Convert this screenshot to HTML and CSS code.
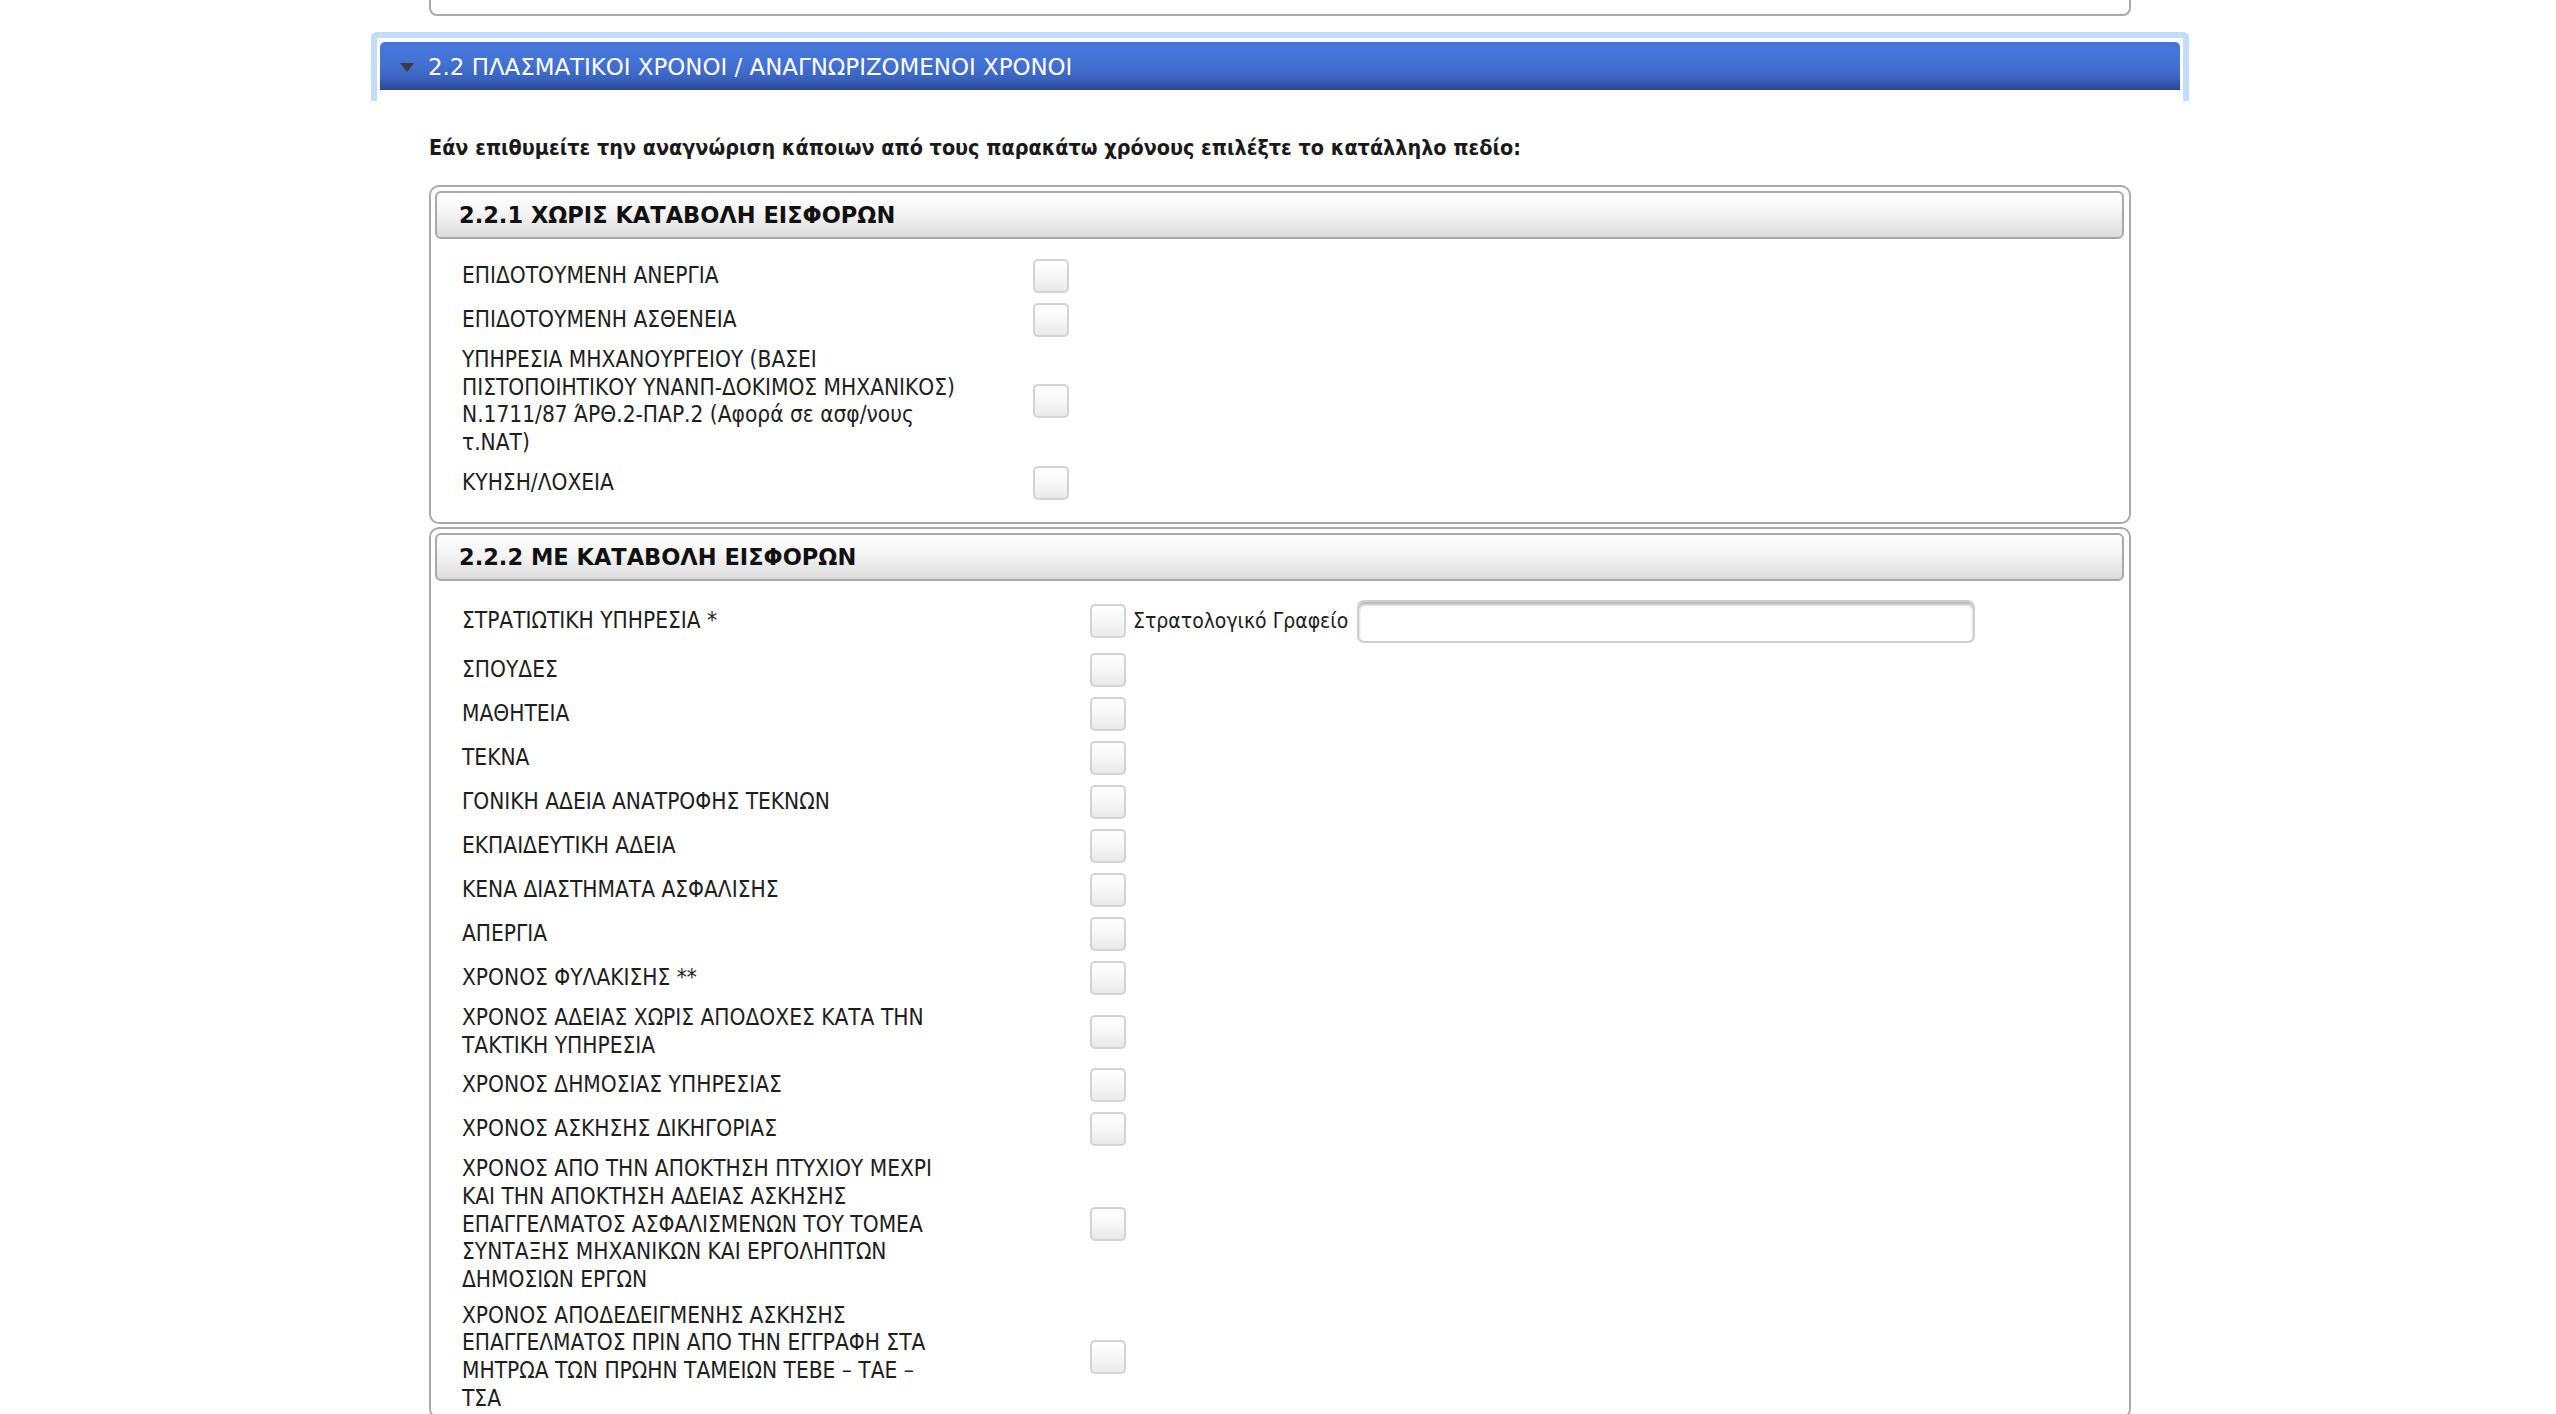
FILE: index.html
```html
<!DOCTYPE html>
<html lang="el">
<head>
<meta charset="utf-8">
<title>Πλασματικοί χρόνοι</title>
<link rel="stylesheet" href="styles.css">
</head>
<body>
<div class="wrap">
  <div class="prev-box"></div>

  <div class="band">
    <div class="band-bar">
      <svg class="caret" width="14" height="9" viewBox="0 0 14 9"><polygon points="0,0 14,0 7,9" fill="#3c3c3c"/></svg>
      <span>2.2 ΠΛΑΣΜΑΤΙΚΟΙ ΧΡΟΝΟΙ / ΑΝΑΓΝΩΡΙΖΟΜΕΝΟΙ ΧΡΟΝΟΙ</span>
    </div>
  </div>

  <p class="intro">Εάν επιθυμείτε την αναγνώριση κάποιων από τους παρακάτω χρόνους επιλέξτε το κατάλληλο πεδίο:</p>

  <div class="group group-a">
    <div class="group-head">2.2.1 ΧΩΡΙΣ ΚΑΤΑΒΟΛΗ ΕΙΣΦΟΡΩΝ</div>
    <div class="rows rows-a">
      <div class="row"><span class="label">ΕΠΙΔΟΤΟΥΜΕΝΗ ΑΝΕΡΓΙΑ</span><span class="check"></span></div>
      <div class="row"><span class="label">ΕΠΙΔΟΤΟΥΜΕΝΗ ΑΣΘΕΝΕΙΑ</span><span class="check"></span></div>
      <div class="row"><span class="label">ΥΠΗΡΕΣΙΑ ΜΗΧΑΝΟΥΡΓΕΙΟΥ (ΒΑΣΕΙ ΠΙΣΤΟΠΟΙΗΤΙΚΟΥ ΥΝΑΝΠ-ΔΟΚΙΜΟΣ ΜΗΧΑΝΙΚΟΣ) Ν.1711/87 ΆΡΘ.2-ΠΑΡ.2 (Αφορά σε ασφ/νους τ.ΝΑΤ)</span><span class="check"></span></div>
      <div class="row"><span class="label">ΚΥΗΣΗ/ΛΟΧΕΙΑ</span><span class="check"></span></div>
    </div>
  </div>

  <div class="group group-b">
    <div class="group-head">2.2.2 ΜΕ ΚΑΤΑΒΟΛΗ ΕΙΣΦΟΡΩΝ</div>
    <div class="rows rows-b">
      <div class="row row-field"><span class="label">ΣΤΡΑΤΙΩΤΙΚΗ ΥΠΗΡΕΣΙΑ *</span><span class="check-line"><span class="check"></span><span class="field-label">Στρατολογικό Γραφείο</span><span class="text-input"></span></span></div>
      <div class="row"><span class="label">ΣΠΟΥΔΕΣ</span><span class="check"></span></div>
      <div class="row"><span class="label">ΜΑΘΗΤΕΙΑ</span><span class="check"></span></div>
      <div class="row"><span class="label">ΤΕΚΝΑ</span><span class="check"></span></div>
      <div class="row"><span class="label">ΓΟΝΙΚΗ ΑΔΕΙΑ ΑΝΑΤΡΟΦΗΣ ΤΕΚΝΩΝ</span><span class="check"></span></div>
      <div class="row"><span class="label">ΕΚΠΑΙΔΕΥΤΙΚΗ ΑΔΕΙΑ</span><span class="check"></span></div>
      <div class="row"><span class="label">ΚΕΝΑ ΔΙΑΣΤΗΜΑΤΑ ΑΣΦΑΛΙΣΗΣ</span><span class="check"></span></div>
      <div class="row"><span class="label">ΑΠΕΡΓΙΑ</span><span class="check"></span></div>
      <div class="row"><span class="label">ΧΡΟΝΟΣ ΦΥΛΑΚΙΣΗΣ **</span><span class="check"></span></div>
      <div class="row"><span class="label">ΧΡΟΝΟΣ ΑΔΕΙΑΣ ΧΩΡΙΣ ΑΠΟΔΟΧΕΣ ΚΑΤΑ ΤΗΝ ΤΑΚΤΙΚΗ ΥΠΗΡΕΣΙΑ</span><span class="check"></span></div>
      <div class="row"><span class="label">ΧΡΟΝΟΣ ΔΗΜΟΣΙΑΣ ΥΠΗΡΕΣΙΑΣ</span><span class="check"></span></div>
      <div class="row"><span class="label">ΧΡΟΝΟΣ ΑΣΚΗΣΗΣ ΔΙΚΗΓΟΡΙΑΣ</span><span class="check"></span></div>
      <div class="row"><span class="label">ΧΡΟΝΟΣ ΑΠΟ ΤΗΝ ΑΠΟΚΤΗΣΗ ΠΤΥΧΙΟΥ ΜΕΧΡΙ ΚΑΙ ΤΗΝ ΑΠΟΚΤΗΣΗ ΑΔΕΙΑΣ ΑΣΚΗΣΗΣ ΕΠΑΓΓΕΛΜΑΤΟΣ ΑΣΦΑΛΙΣΜΕΝΩΝ ΤΟΥ ΤΟΜΕΑ ΣΥΝΤΑΞΗΣ ΜΗΧΑΝΙΚΩΝ ΚΑΙ ΕΡΓΟΛΗΠΤΩΝ ΔΗΜΟΣΙΩΝ ΕΡΓΩΝ</span><span class="check"></span></div>
      <div class="row"><span class="label">ΧΡΟΝΟΣ ΑΠΟΔΕΔΕΙΓΜΕΝΗΣ ΑΣΚΗΣΗΣ ΕΠΑΓΓΕΛΜΑΤΟΣ ΠΡΙΝ ΑΠΟ ΤΗΝ ΕΓΓΡΑΦΗ ΣΤΑ ΜΗΤΡΩΑ ΤΩΝ ΠΡΩΗΝ ΤΑΜΕΙΩΝ ΤΕΒΕ – ΤΑΕ – ΤΣΑ</span><span class="check"></span></div>
    </div>
  </div>
</div>
</body>
</html>
```

FILE: styles.css
```css
html, body {
  margin: 0;
  padding: 0;
  background: #ffffff;
}

body {
  font-family: "DejaVu Sans", Verdana, sans-serif;
  color: #1c1c1c;
}

.wrap {
  width: 1818px;
  margin-left: calc(50% - 907px);
}

/* bottom edge of the block above, scrolled mostly out of view */
.prev-box {
  margin: 0 58px;
  height: 14px;
  border: 2px solid #a9a9a9;
  border-top: 0;
  border-radius: 0 0 8px 8px;
}

/* collapsible section header */
.band {
  margin-top: 16px;
  border: 6px solid #c1ddf9;
  border-bottom: 0;
  border-radius: 6px 6px 0 0;
  padding: 4px 3px 11px;
}

.band-bar {
  height: 48px;
  display: flex;
  align-items: center;
  gap: 14px;
  padding-left: 20px;
  border-radius: 5px 5px 0 0;
  background: linear-gradient(#4677da 0%, #4473d6 40%, #3b64c0 75%, #294796 100%);
  color: #ffffff;
  font-size: 22.9px;
}

.band-bar span {
  margin-top: 2px;
}

.caret {
  display: block;
  margin-top: 2px;
}

.intro {
  margin: 33px 58px 23px;
  font-family: "DejaVu Sans Condensed", "DejaVu Sans", sans-serif;
  font-weight: bold;
  font-size: 21.4px;
  line-height: 28px;
  color: #1a1a1a;
}

/* bordered groups of checkboxes */
.group {
  margin: 0 58px;
  border: 2px solid #a9a9a9;
  border-radius: 10px;
  padding: 4px 5px 0 4px;
}

.group-a {
  padding-bottom: 17px;
}

.group-b {
  margin-top: 3px;
}

.group-head {
  height: 44px;
  display: flex;
  align-items: center;
  padding-left: 22px;
  border: 2px solid #a9a9a9;
  border-radius: 6px;
  background: linear-gradient(#ffffff 0%, #f4f4f4 45%, #dcdcdc 100%);
  font-weight: bold;
  font-size: 22.5px;
  color: #111111;
}

.rows {
  padding: 15px 0 0 27px;
}

.rows-b {
  padding-top: 14px;
}

.row {
  display: grid;
  align-items: center;
  padding: 4px 0;
}

.row-field {
  padding: 5px 0;
}

.rows-a .row {
  grid-template-columns: 571px auto;
}

.rows-b .row {
  grid-template-columns: 628px auto;
}

.label {
  font-family: "DejaVu Sans Condensed", "DejaVu Sans", sans-serif;
  font-size: 22.5px;
  line-height: 27.7px;
  color: #1e1e1e;
}

.rows-a .label {
  max-width: 505px;
}

.rows-b .label {
  max-width: 482px;
}

.check {
  display: block;
  width: 32px;
  height: 30px;
  margin: 1px 0;
  border: 2px solid #d3d3d3;
  border-radius: 5px;
  background: linear-gradient(#ffffff 0%, #f7f7f7 50%, #e9e9e9 100%);
}

.check-line {
  display: flex;
  align-items: center;
}

.field-label {
  margin: 0 9px 0 7px;
  font-family: "DejaVu Sans Condensed", "DejaVu Sans", sans-serif;
  font-size: 21px;
  color: #1e1e1e;
}

.text-input {
  display: block;
  width: 614px;
  height: 39px;
  border: 2px solid #cfcfcf;
  border-radius: 7px;
  box-shadow: inset 0 3px 3px rgba(0, 0, 0, 0.28);
  background: #ffffff;
}
```
